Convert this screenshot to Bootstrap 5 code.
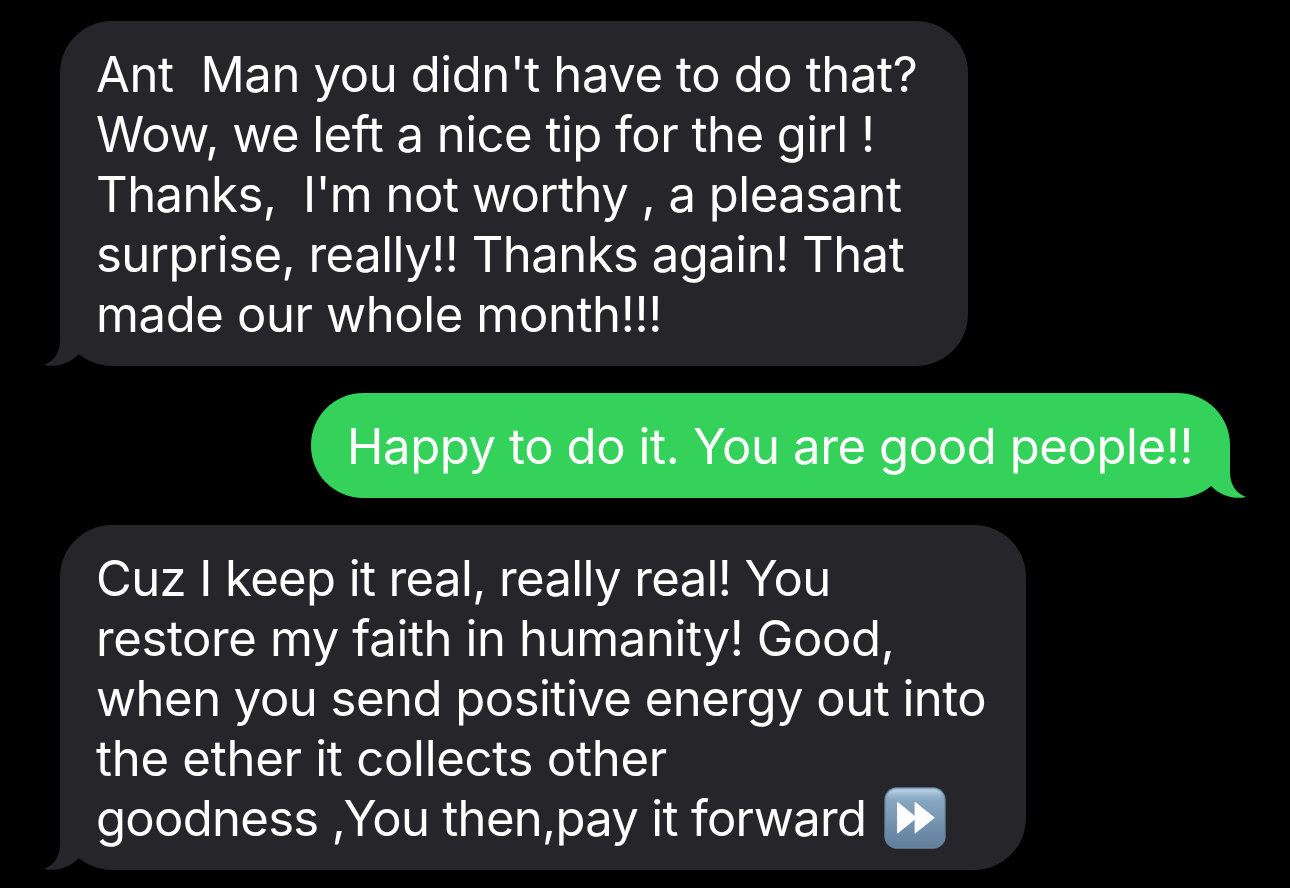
<!DOCTYPE html>
<html lang="en">
<head>
  <meta charset="UTF-8">
  <title>Messages</title>
  <meta name="viewport" content="width=device-width, initial-scale=1.0">
  <link href="https://cdn.jsdelivr.net/npm/bootstrap@5.3.0/dist/css/bootstrap.min.css" rel="stylesheet">
  <style>
    body { background: #000; color: #fff; font-family: Inter, sans-serif; font-size: 49px; line-height: 60px; height: 888px; overflow: hidden; }
    .chat { padding: 21px 60px 0; gap: 27px; }
    .bubble { border-radius: 52px; padding: 24px 36px 21px; }
    .received { background: #26252a; color: #fff; }
    .sent { background: #34d15b; width: 919px; }
    .thanks { width: 908px; }
    .reply { width: 966px; }
    .line { white-space: pre; height: 60px; letter-spacing: -.5px; }
    .ls-1 { letter-spacing: -.25px; }
    .ls-2 { letter-spacing: -.38px; }
    .ls-3 { letter-spacing: -.6px; }
    .ls-4 { letter-spacing: -.69px; }
    .tail { bottom: 0; width: 36px; height: 60px; }
    .received .tail { left: -16px; fill: #26252a; }
    .sent .tail { right: -16px; fill: #34d15b; transform: scaleX(-1); }
    .emoji { width: 62px; height: 62px; margin: -2px 0 0 18px; }
  </style>
</head>
<body>
  <main class="chat d-flex flex-column">
    <div class="bubble received thanks position-relative align-self-start">
      <div class="line ls-2">Ant  Man you didn't have to do that?</div>
      <div class="line">Wow, we left a nice tip for the girl !</div>
      <div class="line">Thanks,  I'm not worthy , a pleasant</div>
      <div class="line">surprise, really!! Thanks again! That</div>
      <div class="line ls-2">made our whole month!!!</div>
      <svg class="tail position-absolute" viewBox="0 0 36 60"><path d="M16 10V34C16 47 10 55 0 59C13 62 26 57 35 48V10Z"/></svg>
    </div>

    <div class="bubble sent position-relative align-self-end">
      <div class="line ls-2">Happy to do it. You are good people!!</div>
      <svg class="tail position-absolute" viewBox="0 0 36 60"><path d="M16 10V34C16 47 10 55 0 59C13 62 26 57 35 48V10Z"/></svg>
    </div>

    <div class="bubble received reply position-relative align-self-start">
      <div class="line ls-3">Cuz I keep it real, really real! You</div>
      <div class="line ls-2">restore my faith in humanity! Good,</div>
      <div class="line">when you send positive energy out into</div>
      <div class="line ls-1">the ether it collects other</div>
      <div class="line ls-4 d-flex align-items-center">
        <span>goodness ,You then,pay it forward</span>
        <svg class="emoji flex-shrink-0" viewBox="0 0 62 62" role="img" aria-label="Fast forward">
          <defs>
            <linearGradient id="buttonFill" x1="0" y1="0" x2="0" y2="1">
              <stop offset="0" stop-color="#91b0cb"/>
              <stop offset=".5" stop-color="#7998b5"/>
              <stop offset="1" stop-color="#617e9b"/>
            </linearGradient>
            <linearGradient id="buttonShine" x1="0" y1="0" x2="0" y2="1">
              <stop offset="0" stop-color="#c4d8e8" stop-opacity=".9"/>
              <stop offset="1" stop-color="#91b0cb" stop-opacity="0"/>
            </linearGradient>
          </defs>
          <rect x=".3" y=".3" width="61.4" height="61.4" rx="12.5" fill="#64839f"/>
          <rect x="1.5" y="1.2" width="59" height="59" rx="11.5" fill="url(#buttonFill)"/>
          <rect x="4" y="2.5" width="54" height="12" rx="8" fill="url(#buttonShine)"/>
          <path d="M13.5 15.2L31 29.5V15.2L50.3 30.7L31 46.2V32L13.5 46.2Z" fill="#fff" stroke="#fff" stroke-width=".8" stroke-linejoin="round"/>
        </svg>
      </div>
      <svg class="tail position-absolute" viewBox="0 0 36 60"><path d="M16 10V34C16 47 10 55 0 59C13 62 26 57 35 48V10Z"/></svg>
    </div>
  </main>
  <script src="https://cdn.jsdelivr.net/npm/bootstrap@5.3.0/dist/js/bootstrap.bundle.min.js"></script>
</body>
</html>
